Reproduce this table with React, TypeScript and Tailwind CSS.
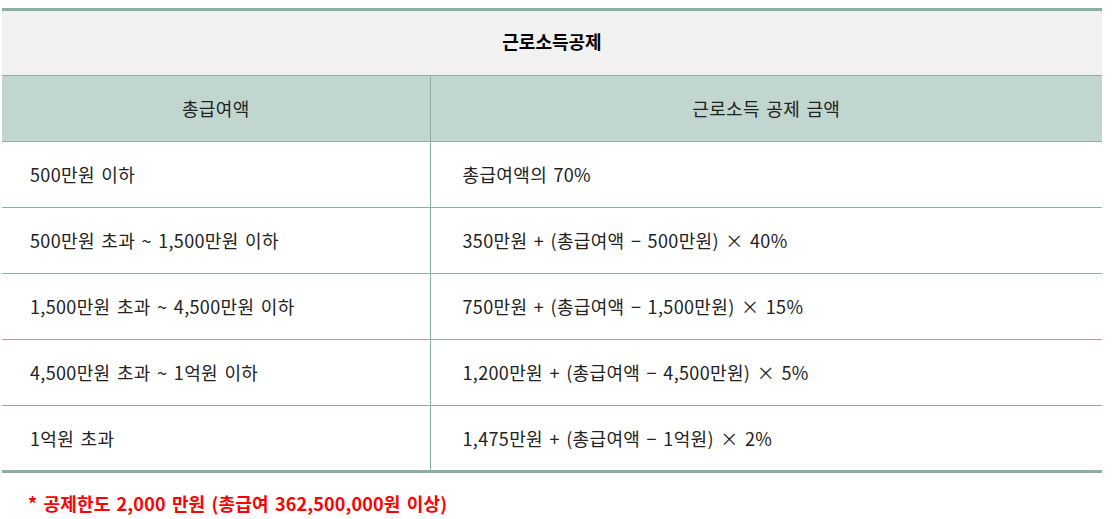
const rows: [string, string][] = [
  ["500만원 이하", "총급여액의 70%"],
  ["500만원 초과 ~ 1,500만원 이하", "350만원 + (총급여액 − 500만원) × 40%"],
  ["1,500만원 초과 ~ 4,500만원 이하", "750만원 + (총급여액 − 1,500만원) × 15%"],
  ["4,500만원 초과 ~ 1억원 이하", "1,200만원 + (총급여액 − 4,500만원) × 5%"],
  ["1억원 초과", "1,475만원 + (총급여액 − 1억원) × 2%"],
];

export default function App() {
  return (
    <main
      className="min-h-screen bg-white pl-[2px] pt-[8px] text-[#222] [word-spacing:2px]"
      style={{ fontFamily: '"Noto Sans CJK KR", "Noto Sans", sans-serif' }}
    >
      <table className="w-[1100px] border-collapse border-t-[3px] border-b-[3px] border-[#8ab0a2] text-[18px] tracking-[0.35px]">
        <thead>
          <tr className="h-[66px] bg-[#f1f1f1]">
            <th colSpan={2} className="pb-[3px] text-[18px] font-bold tracking-normal text-black">
              근로소득공제
            </th>
          </tr>
          <tr className="h-[66px] bg-[#c0d6cf]">
            <th className="w-[428px] border-t border-r border-b border-[#8ab0a2] font-normal">총급여액</th>
            <th className="border-t border-b border-[#8ab0a2] font-normal">근로소득 공제 금액</th>
          </tr>
        </thead>
        <tbody>
          {rows.map(([range, amount], i) => (
            <tr key={i} className="h-[66px]">
              <td
                className={`border-r border-[#8ab0a2] pl-[28px] ${i < rows.length - 1 ? "border-b" : ""}`}
              >
                {range}
              </td>
              <td className={`border-[#8ab0a2] pl-[32px] ${i < rows.length - 1 ? "border-b" : ""}`}>
                {amount}
              </td>
            </tr>
          ))}
        </tbody>
      </table>
      <p className="mt-[17px] pl-[26px] text-[18px] font-bold tracking-[0.15px] text-[#ff0000]">
        * 공제한도 2,000 만원 (총급여 362,500,000원 이상)
      </p>
    </main>
  );
}
